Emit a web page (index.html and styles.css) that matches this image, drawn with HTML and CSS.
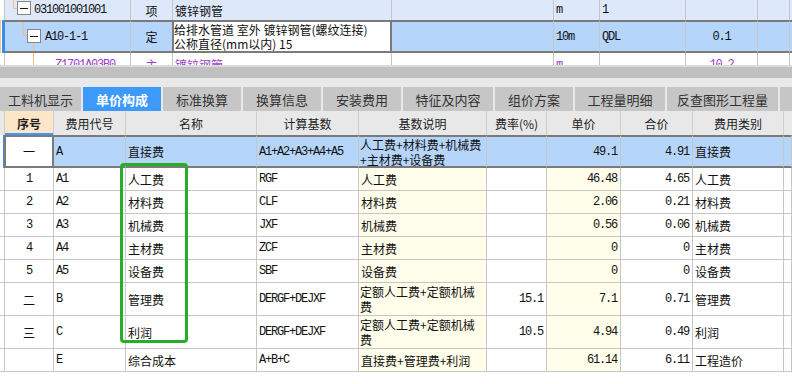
FILE: index.html
```html
<!DOCTYPE html>
<html lang="zh">
<head>
<meta charset="utf-8">
<title>单价构成</title>
<link rel="stylesheet" href="styles.css">
</head>
<body>
<div class="top">
  <div class="trow r1">
    <div class="c0"></div>
    <div class="c tree">
      <svg width="29" height="20" viewBox="0 0 29 20"><path d="M8.5 0V8.5H12" stroke="#f4bd82" fill="none"/><rect x="12.5" y="1.5" width="13" height="13" fill="#fff" stroke="#858585"/><path d="M15 8.5H23" stroke="#1a1a1a"/></svg>
      <span class="mono">031001001001</span>
    </div>
    <div class="c ctr">项</div>
    <div class="c">镀锌钢管</div>
    <div class="c"></div>
    <div class="c mono">m</div>
    <div class="c mono">1</div>
    <div class="c"></div>
    <div class="c"></div>
    <div class="c end"></div>
  </div>
  <div class="trow r2">
    <div class="c0"></div>
    <div class="c tree">
      <svg width="40" height="29" viewBox="0 0 40 29"><path d="M18.5 0V13.5H22" stroke="#f4bd82" fill="none"/><path d="M28.5 20.5V29" stroke="#f4bd82" fill="none"/><rect x="22.5" y="7.5" width="13" height="13" fill="#fff" stroke="#858585"/><path d="M25 14.5H33" stroke="#1a1a1a"/></svg>
      <span class="mono">A10-1-1</span>
    </div>
    <div class="c ctr">定</div>
    <div class="c editor"><span>给排水管道 室外 镀锌钢管(螺纹连接)</span><span>公称直径(mm以内) 15</span></div>
    <div class="c"></div>
    <div class="c mono">10m</div>
    <div class="c mono">QDL</div>
    <div class="c mono ctr">0.1</div>
    <div class="c"></div>
    <div class="c end"></div>
  </div>
  <div class="trow r3">
    <div class="c0"></div>
    <div class="c tree">
      <svg width="50" height="23" viewBox="0 0 50 23"><path d="M28.5 0V23" stroke="#f4bd82" fill="none"/></svg>
      <span class="mono">Z1701A03B0...</span>
    </div>
    <div class="c ctr">主</div>
    <div class="c">镀锌钢管</div>
    <div class="c"></div>
    <div class="c mono">m</div>
    <div class="c"></div>
    <div class="c mono ctr">10.2</div>
    <div class="c"></div>
    <div class="c end"></div>
  </div>
</div>

<div class="split">
  <div class="split-a"></div>
  <div class="split-b"></div>
  <div class="split-c"></div>
</div>

<div class="tabs">
  <div class="tab w81">工料机显示</div>
  <div class="tab w78 on">单价构成</div>
  <div class="tab w78">标准换算</div>
  <div class="tab w78">换算信息</div>
  <div class="tab w78">安装费用</div>
  <div class="tab w90">特征及内容</div>
  <div class="tab w78">组价方案</div>
  <div class="tab w90">工程量明细</div>
  <div class="tab w111">反查图形工程量</div>
  <div class="tab rest"></div>
</div>

<div class="tbl">
  <div class="row hrow">
    <div class="c"></div>
    <div class="c key">序号</div>
    <div class="c">费用代号</div>
    <div class="c">名称</div>
    <div class="c">计算基数</div>
    <div class="c">基数说明</div>
    <div class="c">费率(%)</div>
    <div class="c">单价</div>
    <div class="c">合价</div>
    <div class="c">费用类别</div>
    <div class="c end"></div>
  </div>

  <div class="row brow tall sel">
    <div class="b0"></div>
    <div class="c ctr cur">一</div>
    <div class="c mono">A</div>
    <div class="c">直接费</div>
    <div class="c mono">A1+A2+A3+A4+A5</div>
    <div class="c multi">人工费+材料费+机械费<br>+主材费+设备费</div>
    <div class="c"></div>
    <div class="c num">49.1</div>
    <div class="c num">4.91</div>
    <div class="c">直接费</div>
    <div class="c end"></div>
  </div>

  <div class="row brow">
    <div class="b0"></div>
    <div class="c ctr mono">1</div>
    <div class="c mono">A1</div>
    <div class="c">人工费</div>
    <div class="c mono">RGF</div>
    <div class="c y">人工费</div>
    <div class="c"></div>
    <div class="c num y">46.48</div>
    <div class="c num">4.65</div>
    <div class="c">人工费</div>
    <div class="c end"></div>
  </div>

  <div class="row brow">
    <div class="b0"></div>
    <div class="c ctr mono">2</div>
    <div class="c mono">A2</div>
    <div class="c">材料费</div>
    <div class="c mono">CLF</div>
    <div class="c y">材料费</div>
    <div class="c"></div>
    <div class="c num y">2.06</div>
    <div class="c num">0.21</div>
    <div class="c">材料费</div>
    <div class="c end"></div>
  </div>

  <div class="row brow">
    <div class="b0"></div>
    <div class="c ctr mono">3</div>
    <div class="c mono">A3</div>
    <div class="c">机械费</div>
    <div class="c mono">JXF</div>
    <div class="c y">机械费</div>
    <div class="c"></div>
    <div class="c num y">0.56</div>
    <div class="c num">0.06</div>
    <div class="c">机械费</div>
    <div class="c end"></div>
  </div>

  <div class="row brow">
    <div class="b0"></div>
    <div class="c ctr mono">4</div>
    <div class="c mono">A4</div>
    <div class="c">主材费</div>
    <div class="c mono">ZCF</div>
    <div class="c y">主材费</div>
    <div class="c"></div>
    <div class="c num y">0</div>
    <div class="c num">0</div>
    <div class="c">主材费</div>
    <div class="c end"></div>
  </div>

  <div class="row brow">
    <div class="b0"></div>
    <div class="c ctr mono">5</div>
    <div class="c mono">A5</div>
    <div class="c">设备费</div>
    <div class="c mono">SBF</div>
    <div class="c y">设备费</div>
    <div class="c"></div>
    <div class="c num y">0</div>
    <div class="c num">0</div>
    <div class="c">设备费</div>
    <div class="c end"></div>
  </div>

  <div class="row brow tall">
    <div class="b0"></div>
    <div class="c ctr">二</div>
    <div class="c mono">B</div>
    <div class="c">管理费</div>
    <div class="c mono">DERGF+DEJXF</div>
    <div class="c y multi">定额人工费+定额机械<br>费</div>
    <div class="c num">15.1</div>
    <div class="c num y">7.1</div>
    <div class="c num">0.71</div>
    <div class="c">管理费</div>
    <div class="c end"></div>
  </div>

  <div class="row brow tall">
    <div class="b0"></div>
    <div class="c ctr">三</div>
    <div class="c mono">C</div>
    <div class="c">利润</div>
    <div class="c mono">DERGF+DEJXF</div>
    <div class="c y multi">定额人工费+定额机械<br>费</div>
    <div class="c num">10.5</div>
    <div class="c num y">4.94</div>
    <div class="c num">0.49</div>
    <div class="c">利润</div>
    <div class="c end"></div>
  </div>

  <div class="row brow">
    <div class="b0"></div>
    <div class="c ctr"></div>
    <div class="c mono">E</div>
    <div class="c">综合成本</div>
    <div class="c mono">A+B+C</div>
    <div class="c y">直接费+管理费+利润</div>
    <div class="c"></div>
    <div class="c num y">61.14</div>
    <div class="c num">6.11</div>
    <div class="c">工程造价</div>
    <div class="c end"></div>
  </div>

  <div class="mark"></div>
</div>
</body>
</html>
```

FILE: styles.css
```css
* {
  box-sizing: border-box;
  margin: 0;
  padding: 0;
}

body {
  margin: 0;
  width: 792px;
  height: 384px;
  overflow: hidden;
  background: #fff;
  color: #111;
  font-family: "Noto Sans CJK SC", "Noto Sans", sans-serif;
  font-size: 12px;
}

.mono {
  font-family: "Liberation Mono", "DejaVu Sans Mono", monospace;
  font-size: 12px;
  letter-spacing: -1.2px;
}

/* ---------- top tree grid ---------- */
.top {
  height: 65px;
  overflow: hidden;
}

.trow {
  display: grid;
  grid-template-columns: 5px 126px 42px 219px 162px 46px 86px 72px 32px 2px;
}

.trow .c {
  display: flex;
  align-items: center;
  padding: 0 2px;
  border-right: 1px solid #c3c6cb;
  white-space: nowrap;
  overflow: hidden;
}

.trow .c0 {
  border-right: 1px solid #c3c6cb;
}

.trow .tree {
  padding: 0;
}

.trow .tree svg {
  flex: none;
  display: block;
}

.ctr {
  justify-content: center;
}

.r1 {
  height: 20px;
  background: #dde9fb;
}

.r1 .c0,
.r3 .c0 {
  background: #fff;
}

.r2 {
  height: 33px;
  background: #b5d5fb;
}

.r2 .c {
  border-top: 2px solid #7b7b7b;
  border-bottom: 2px solid #7b7b7b;
}

.r2 .c0 {
  border-right: none;
  background: linear-gradient(90deg, #f6c58f 0 1px, #fff 1px 2px, #3a8de6 2px 5px);
}

.r2 .editor {
  margin-left: -1px;
  background: #fff;
  border-left: 2px solid #7b7b7b;
  border-right: 2px solid #7b7b7b;
  flex-direction: column;
  align-items: flex-start;
  justify-content: center;
  padding: 0;
  line-height: 14px;
}

.r3 {
  height: 23px;
  background: #fff;
  color: #9a3dc5;
}

.trow .end {
  border-right: none;
}

/* ---------- splitter ---------- */
.split-a {
  height: 2px;
  background: #dcdcdc;
}

.split-b {
  height: 11px;
  background: #c0c0c0;
}

.split-c {
  height: 9px;
  background: #e9e9e9;
}

/* ---------- tabs ---------- */
.tabs {
  display: flex;
  gap: 2px;
  height: 24px;
  background: #e9e9e9;
}

.tab {
  flex: none;
  display: flex;
  align-items: center;
  justify-content: center;
  background: #c6c6c6;
  color: #333;
  font-size: 13px;
  white-space: nowrap;
}

.tab.on {
  background: #3d9afb;
  color: #fff;
  font-weight: bold;
}

.w81 { width: 81px; }
.w78 { width: 78px; }
.w90 { width: 90px; }
.w111 { width: 111px; }
.tab.rest { flex: 1; }

/* ---------- fee table ---------- */
.tbl {
  position: relative;
}

.row {
  display: grid;
  grid-template-columns: 5px 49px 72px 131px 102px 128px 60px 74px 72px 91px 8px;
}

.row .c {
  display: flex;
  align-items: center;
  padding: 0 2px;
  border-right: 1px solid #c6c6c6;
  white-space: nowrap;
  overflow: hidden;
}

.row .end {
  border-right: none;
}

.hrow {
  height: 24px;
  background: #e8e8e8;
}

.hrow .c {
  justify-content: center;
  color: #222;
  border-right-color: #cfcfcf;
}

.hrow .key {
  background: #fde5c7;
  font-weight: bold;
  box-shadow: inset 0 -2px #3c98fa;
}

.hrow .end {
  background: #e8e8e8;
}

.brow {
  height: 23px;
  background: #fff;
}

.brow .c,
.brow .b0 {
  border-bottom: 1px solid #c6c6c6;
}

.brow .b0 {
  border-right: 1px solid #c6c6c6;
}

.brow .end {
  border-right: 1px solid #c6c6c6;
}

.brow.tall {
  height: 33px;
}

.y {
  background: #fffeea;
}

.num {
  justify-content: flex-end;
  padding-right: 3px !important;
  font-family: "Liberation Mono", "DejaVu Sans Mono", monospace;
  letter-spacing: -1.2px;
}

.multi {
  line-height: 15px;
  white-space: normal !important;
  padding-left: 1px !important;
}

.sel {
  background: #b5d5fb;
}

.sel .c {
  background: #b5d5fb;
  border-top: 2px solid #7b7b7b;
  border-bottom: 2px solid #7b7b7b;
}

.sel .b0 {
  border: none;
  background: linear-gradient(90deg, #fff 0 3px, #3a8de6 3px 5px);
}

.sel .cur {
  margin-left: -1px;
  background: #fff;
  border-left: 2px solid #7b7b7b;
  border-right: 2px solid #7b7b7b;
}

.mark {
  position: absolute;
  left: 120px;
  top: 52px;
  width: 68px;
  height: 180px;
  border: 3px solid #27ad27;
  border-radius: 4px;
}
```
